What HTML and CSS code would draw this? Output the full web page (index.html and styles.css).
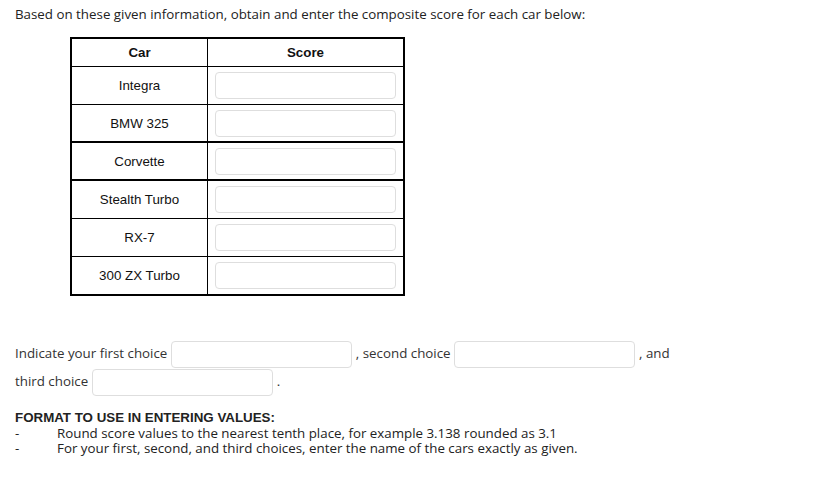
FILE: index.html
```html
<!DOCTYPE html>
<html>
<head>
<meta charset="utf-8">
<link rel="stylesheet" href="styles.css">
</head>
<body>
<p class="intro">Based on these given information, obtain and enter the composite score for each car below:</p>
<table class="cars">
  <thead>
    <tr><th class="c-car">Car</th><th class="c-score">Score</th></tr>
  </thead>
  <tbody>
    <tr><td>Integra</td><td><input class="score" type="text"></td></tr>
    <tr class="thick"><td>BMW 325</td><td><input class="score" type="text"></td></tr>
    <tr class="thick"><td>Corvette</td><td><input class="score" type="text"></td></tr>
    <tr><td>Stealth Turbo</td><td><input class="score" type="text"></td></tr>
    <tr><td>RX-7</td><td><input class="score" type="text"></td></tr>
    <tr><td>300 ZX Turbo</td><td><input class="score" type="text"></td></tr>
  </tbody>
</table>
<div class="choices">Indicate your first choice <input class="choice" type="text"><span class="sep">, second choice</span> <input class="choice" type="text"><span class="sep">, and</span> third choice <input class="choice" type="text"><span class="sep">.</span></div>
<div class="format">
  <div class="format-title">FORMAT TO USE IN ENTERING VALUES:</div>
  <div class="rule"><span class="dash">-</span><span>Round score values to the nearest tenth place, for example 3.138 rounded as 3.1</span></div>
  <div class="rule"><span class="dash">-</span><span>For your first, second, and third choices, enter the name of the cars exactly as given.</span></div>
</div>
</body>
</html>
```
FILE: styles.css
```css
html, body {
  margin: 0;
  padding: 0;
  background: #fff;
}
body {
  font-family: "Open Sans", "DejaVu Sans", sans-serif;
  font-size: 13.33px;
  color: #333;
  padding: 0 15px;
}
.intro {
  margin: 0;
  padding-top: 5px;
  line-height: 18px;
  color: #222;
}
.cars {
  margin: 14px 0 0 55px;
  border-collapse: collapse;
  border: 2px solid #000;
  font-family: "Liberation Sans", Arial, sans-serif;
  font-size: 13.33px;
  color: #111;
}
.cars th, .cars td {
  border: 1px solid #000;
  text-align: center;
  padding: 0;
}
.cars th {
  height: 27px;
  font-weight: bold;
}
.cars td {
  height: 37px;
}
.cars tr.thick td {
  border-bottom-width: 2px;
  height: 36px;
}
.c-car { width: 135px; }
.c-score { width: 195px; }
.score {
  display: block;
  box-sizing: border-box;
  width: 181px;
  height: 27px;
  margin: 0 auto;
  border: 1px solid #dedede;
  border-radius: 4px;
  background: #fff;
}
.choices {
  margin-top: 44px;
  width: 670px;
  line-height: 27px;
}
.sep {
  margin-left: 4px;
}
.choice {
  box-sizing: border-box;
  width: 181px;
  height: 27px;
  vertical-align: middle;
  border: 1px solid #dedede;
  border-radius: 4px;
  margin: 0;
  background: #fff;
}
.format {
  margin-top: 14px;
  color: #222;
}
.format-title {
  font-family: "Liberation Sans", Arial, sans-serif;
  font-weight: bold;
  font-size: 13.33px;
  line-height: 16px;
}
.rule {
  display: flex;
  line-height: 15px;
  font-size: 13.33px;
}
.dash {
  width: 42px;
  flex: none;
}
```
